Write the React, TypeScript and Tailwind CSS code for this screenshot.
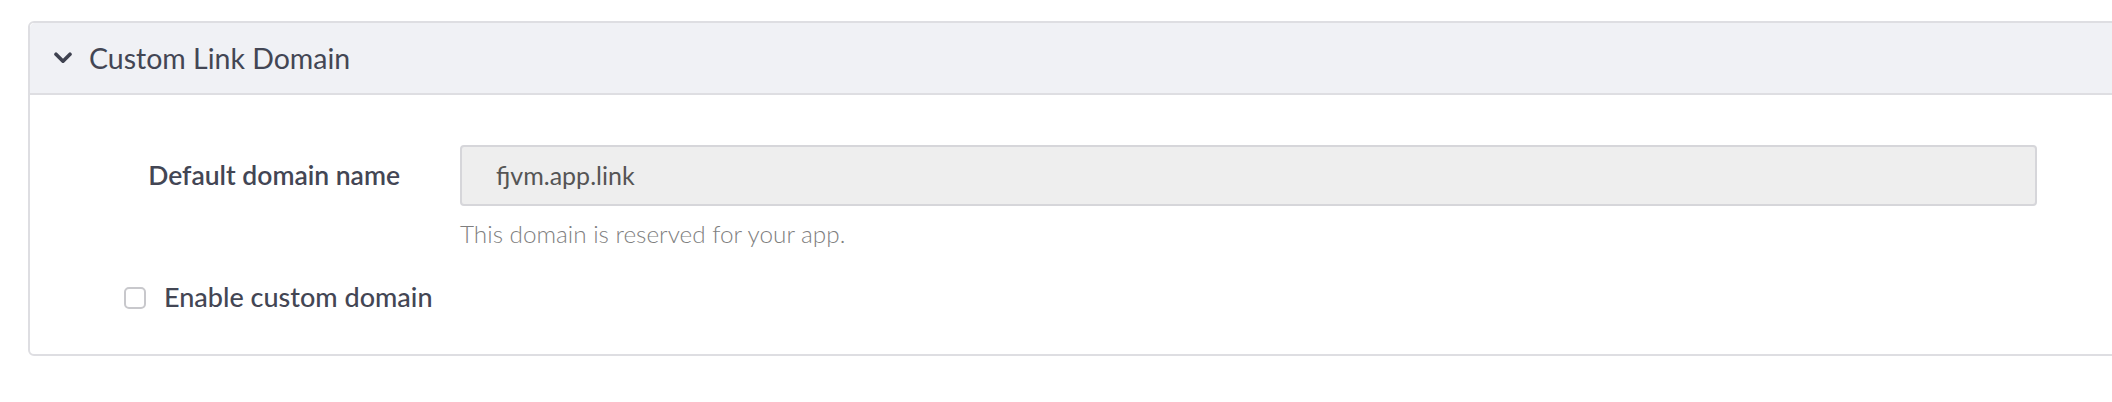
import { useState } from "react";

const font = { fontFamily: "Lato, 'Noto Sans', sans-serif" };

function Chevron() {
  return (
    <svg viewBox="0 0 18 12" className="h-[12px] w-[18px] flex-none" aria-hidden>
      <path d="M2 2.2 9 9.2l7-7" fill="none" stroke="#3f4250" strokeWidth="3.6" strokeLinecap="round" strokeLinejoin="round" />
    </svg>
  );
}

export default function App() {
  const [enabled, setEnabled] = useState(false);

  return (
    <div className="h-[402px] w-[2112px] overflow-hidden bg-white pt-[21px] pl-[28px]" style={font}>
      <section className="w-[2140px] rounded-[6px] border-2 border-[#dedee2] bg-white">
        <header className="flex h-[72px] items-center gap-[17px] rounded-t-[5px] border-b-2 border-[#dedee2] bg-[#f0f1f5] pl-[24px]">
          <Chevron />
          <h2 className="text-[28.5px] font-normal text-[#434654]">Custom Link Domain</h2>
        </header>

        <div className="pt-[50px] pb-[36px]">
          <div className="flex items-start">
            <label className="flex h-[61px] w-[370px] flex-none items-center justify-end text-[26.5px] font-semibold text-[#434654]">
              Default domain name
            </label>
            <div className="mr-[129px] ml-[60px] flex-1">
              <div className="flex h-[61px] items-center rounded-[4px] border-2 border-[#d6d6da] bg-[#eeeeee] pl-[34px] text-[25px] text-[#555555]">
                fjvm.app.link
              </div>
              <p className="mt-[10px] text-[24.3px] font-light text-[#7f7f7f]">This domain is reserved for your app.</p>
            </div>
          </div>

          <label className="mt-[25px] ml-[94px] flex w-max cursor-pointer items-center gap-[18px]">
            <input
              type="checkbox"
              checked={enabled}
              onChange={(e) => setEnabled(e.target.checked)}
              className="h-[22px] w-[22px] appearance-none rounded-[5px] border-2 border-[#c8c8cc] bg-white"
            />
            <span className="text-[27px] font-medium text-[#434654]">Enable custom domain</span>
          </label>
        </div>
      </section>
    </div>
  );
}
